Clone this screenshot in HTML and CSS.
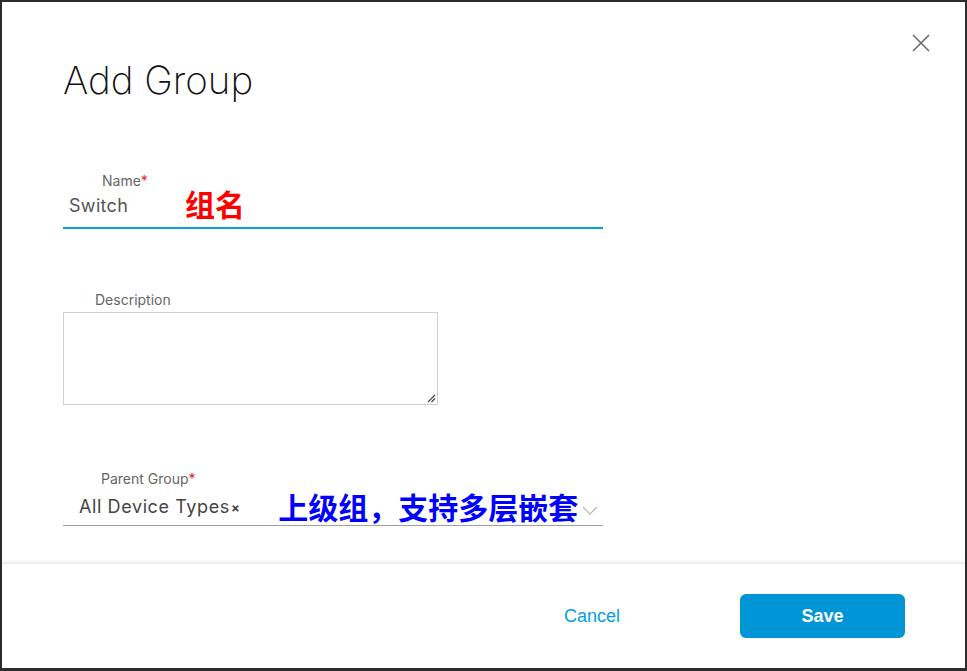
FILE: index.html
```html
<!DOCTYPE html>
<html lang="en">
<head>
<meta charset="utf-8">
<title>Add Group</title>
<link rel="stylesheet" href="styles.css">
</head>
<body>
<div class="modal">
  <button class="close" aria-label="Close">
    <svg width="18" height="18" viewBox="0 0 18 18"><path d="M1 1 L17 17 M17 1 L1 17" stroke="#6b6b6b" stroke-width="1.6" fill="none"/></svg>
  </button>
  <div class="content">
    <h1 class="title">Add Group</h1>
    <div class="field field-name">
      <div class="label">Name<span class="req">*</span></div>
      <div class="input-row">
        <span class="value">Switch</span>
        <span class="note note-red">组名</span>
      </div>
    </div>
    <div class="field field-desc">
      <div class="label label-desc">Description</div>
      <div class="textarea">
        <svg class="grip" width="9" height="9" viewBox="0 0 9 9"><path d="M8 1 L1 8 M8 4.5 L4.5 8" stroke="#444" stroke-width="1.2" fill="none"/></svg>
      </div>
    </div>
    <div class="field field-parent">
      <div class="label label-parent">Parent Group<span class="req">*</span></div>
      <div class="select-row">
        <span class="value value-tag">All Device Types<span class="tag-x">×</span></span>
        <span class="note note-blue">上级组，支持多层嵌套</span>
        <svg class="chev" width="16" height="9" viewBox="0 0 16 9"><path d="M1 1 L8 8 L15 1" stroke="#b5b5b5" stroke-width="1.2" fill="none"/></svg>
      </div>
    </div>
  </div>
  <div class="footer">
    <button class="btn-cancel">Cancel</button>
    <button class="btn-save">Save</button>
  </div>
</div>
</body>
</html>
```
FILE: styles.css
```css
html, body {
  margin: 0;
  padding: 0;
}
body {
  background: #2c2c2c;
  width: 967px;
  height: 671px;
  overflow: hidden;
  font-family: "Liberation Sans", Arial, sans-serif;
}
.modal {
  position: relative;
  margin: 2px 2px 0 2px;
  height: 666px;
  background: #fff;
  display: flex;
  flex-direction: column;
}
.close {
  position: absolute;
  top: 32px;
  right: 35px;
  padding: 0;
  border: 0;
  background: none;
  width: 18px;
  height: 18px;
}
.close svg { display: block; }
.content {
  flex: 1;
  padding: 0 0 0 61px;
}
.title {
  margin: 56px 0 0 0;
  font-family: "Inter", sans-serif;
  font-weight: 200;
  font-size: 38.5px;
  line-height: 44px;
  color: #111;
  letter-spacing: 0;
}
.field {
  width: 540px;
}
.field-name {
  margin-top: 70px;
}
.label {
  font-family: "Inter", "Liberation Sans", sans-serif;
  font-size: 14px;
  line-height: 17px;
  color: #666;
  padding-left: 39px;
}
.req { color: #e2231a; }
.input-row {
  display: flex;
  align-items: center;
  height: 38px;
  border-bottom: 2px solid #049fd9;
  padding-left: 6px;
}
.value {
  font-family: "Inter", "Liberation Sans", sans-serif;
  font-size: 18px;
  color: #555;
  letter-spacing: 0.3px;
  margin-top: -5px;
}
.note {
  font-family: "Noto Sans CJK SC", sans-serif;
  font-weight: 700;
}
.note-red {
  color: #ff0000;
  font-size: 30px;
  margin-left: 57px;
  margin-top: -10px;
}
.field-desc {
  margin-top: 62px;
}
.label-desc {
  padding-left: 32px;
  margin-bottom: 4px;
}
.textarea {
  position: relative;
  width: 373px;
  height: 91px;
  border: 1px solid #cfcfcf;
}
.grip {
  position: absolute;
  right: 1px;
  bottom: 1px;
}
.field-parent {
  margin-top: 65px;
}
.label-parent {
  padding-left: 38px;
}
.select-row {
  display: flex;
  align-items: center;
  height: 38px;
  border-bottom: 1px solid #a0a0a0;
  padding-left: 16px;
}
.value-tag {
  font-family: "Inter", "Liberation Sans", sans-serif;
  font-size: 18px;
  color: #444;
  letter-spacing: 0.6px;
  margin-top: 0;
}
.tag-x {
  font-size: 13px;
  font-weight: 700;
  margin-left: 1px;
}
.note-blue {
  color: #0000ff;
  font-size: 30px;
  margin-left: 38px;
}
.chev {
  margin-left: 4px;
  margin-top: 8px;
}
.footer {
  height: 104px;
  border-top: 1px solid #ececec;
  box-shadow: 0 -2px 3px rgba(0,0,0,0.06);
  display: flex;
  align-items: center;
  justify-content: flex-end;
  padding-right: 60px;
}
.btn-cancel {
  border: 0;
  background: none;
  font-family: "Liberation Sans", Arial, sans-serif;
  font-size: 18px;
  color: #049fd9;
  padding: 0;
  margin-right: 120px;
}
.btn-save {
  width: 165px;
  height: 44px;
  border: 0;
  border-radius: 6px;
  background: #0096d6;
  color: #fff;
  font-family: "Liberation Sans", Arial, sans-serif;
  font-weight: 700;
  font-size: 18px;
}
```
